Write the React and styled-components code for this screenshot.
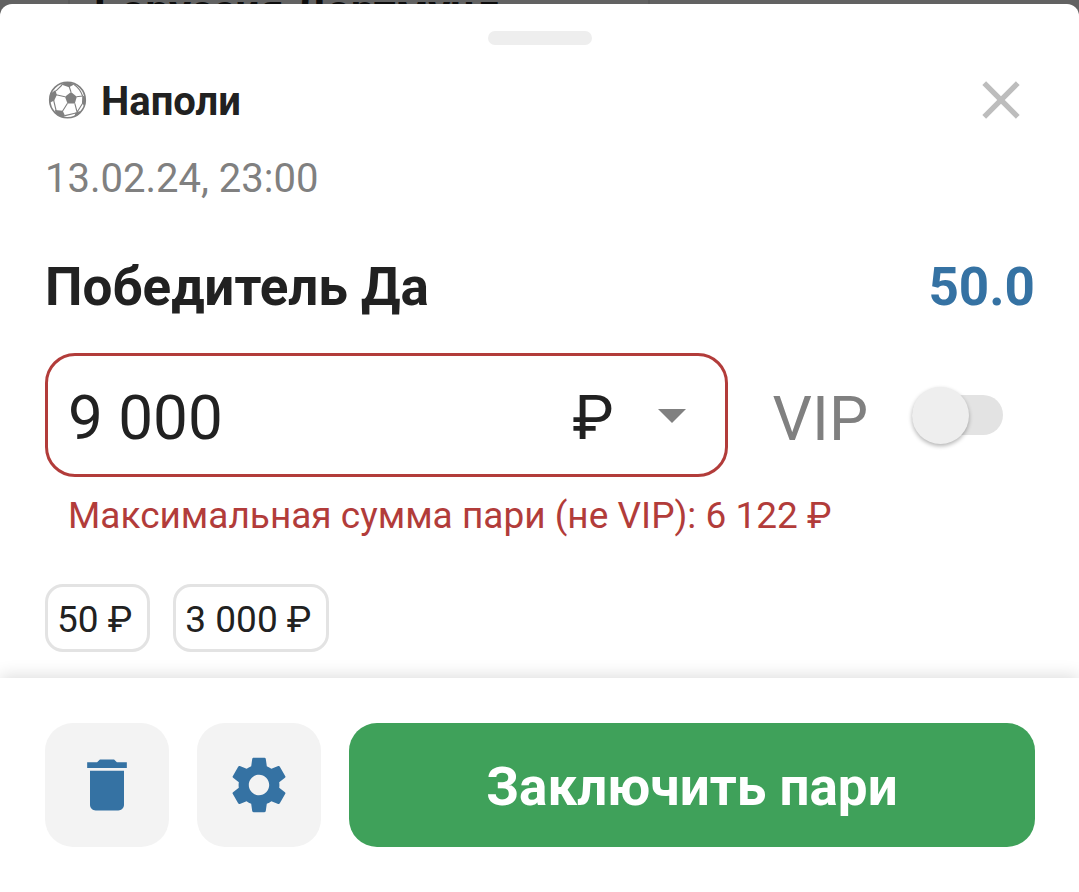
import React, { useState } from 'react';
import styled, { createGlobalStyle, ThemeProvider } from 'styled-components';
import { MdClose, MdDelete, MdSettings } from 'react-icons/md';

const theme = {
  colors: {
    text: '#212121',
    muted: '#808080',
    accent: '#3572a3',
    error: '#b23c3a',
    success: '#3fa15a',
    border: '#e3e3e3',
    surface: '#f3f3f3',
  },
};

const GlobalStyle = createGlobalStyle`
  * {
    box-sizing: border-box;
  }

  body {
    margin: 0;
    background-color: #626262;
    color: ${(props) => props.theme.colors.text};
    font-family: Roboto, 'Liberation Sans', sans-serif;
  }

  button,
  input,
  select {
    font-family: inherit;
    color: inherit;
  }
`;

const Page = styled.div`
  display: flex;
  flex-direction: column;
  min-height: 100vh;
`;

const Backdrop = styled.div`
  display: flex;
  align-items: flex-end;
  height: 4px;
  padding-left: 68px;
  overflow: hidden;
`;

const BackdropCard = styled.div`
  width: 582px;
  margin-bottom: -32px;
  padding-left: 24px;
  border: solid #5a5a5a;
  border-width: 0 2px;
  color: #0d0d0d;
  font-size: 43px;
  font-weight: 700;
  line-height: 52px;
`;

const Sheet = styled.main`
  display: flex;
  flex-direction: column;
  flex: 1;
  background-color: #ffffff;
  border-radius: 12px 12px 0 0;
`;

const Handle = styled.div`
  flex: none;
  align-self: center;
  width: 104px;
  height: 14px;
  margin-top: 27px;
  border-radius: 7px;
  background-color: #eeeeee;
`;

const Content = styled.form`
  flex: 1;
  padding: 25px 44px 24px 45px;
`;

const Row = styled.div`
  display: flex;
  align-items: center;
  justify-content: space-between;
`;

const Team = styled.h1`
  display: flex;
  align-items: center;
  gap: 12px;
  margin: 0;
  font-size: 40px;
  line-height: 56px;
`;

const TeamName = styled.span`
  padding-top: 4px;
`;

const CloseButton = styled.button`
  display: flex;
  align-items: center;
  justify-content: center;
  width: 68px;
  height: 60px;
  padding: 0;
  border: none;
  background: none;
  color: #bdbdbd;
`;

const EventDate = styled.p`
  margin: 25px 0 0;
  color: ${(props) => props.theme.colors.muted};
  font-size: 40px;
  line-height: 48px;
`;

const OutcomeRow = styled(Row)`
  margin-top: 50px;
  font-size: 53px;
  font-weight: 700;
  line-height: 68px;
`;

const Outcome = styled.h2`
  margin: 0;
  font-size: inherit;
`;

const Odds = styled.span`
  color: ${(props) => props.theme.colors.accent};
`;

const StakeRow = styled.div`
  display: flex;
  align-items: center;
  gap: 45px;
  margin-top: 32px;
`;

const StakeField = styled.div`
  display: flex;
  align-items: center;
  flex: 1;
  min-width: 0;
  height: 124px;
  padding: 0 32px 0 20px;
  border: 3px solid ${(props) => props.theme.colors.error};
  border-radius: 30px;
`;

const StakeInput = styled.input`
  flex: 1;
  min-width: 0;
  height: 80px;
  padding: 4px 0 0;
  border: none;
  outline: none;
  background: none;
  font-size: 62px;
`;

const CurrencyPicker = styled.label`
  display: flex;
  align-items: center;
  gap: 36px;
`;

const CurrencySelect = styled.select`
  height: 80px;
  padding: 4px 0 0;
  border: none;
  outline: none;
  background: none;
  appearance: none;
  font-size: 62px;
`;

const VipToggle = styled.label`
  display: flex;
  align-items: center;
  gap: 44px;
  margin-right: 32px;
  color: ${(props) => props.theme.colors.muted};
  font-size: 62px;
  line-height: 76px;
`;

const VipLabel = styled.span`
  padding-top: 8px;
`;

const Switch = styled.input`
  display: flex;
  align-items: center;
  width: 91px;
  height: 40px;
  margin: 0;
  border-radius: 20px;
  background-color: ${(props) => (props.checked ? '#9fc0da' : props.theme.colors.border)};
  appearance: none;

  &::before {
    content: '';
    width: 57px;
    height: 57px;
    margin-left: ${(props) => (props.checked ? '34px' : '0')};
    border-radius: 50%;
    background-color: #eeeeee;
    box-shadow: 0 2px 4px rgba(0, 0, 0, 0.3);
  }
`;

const ErrorText = styled.p`
  margin: 17px 0 0 23px;
  color: ${(props) => props.theme.colors.error};
  font-size: 37px;
  line-height: 44px;
`;

const Chips = styled.div`
  display: flex;
  gap: 23px;
  margin-top: 46px;
`;

const Chip = styled.button`
  height: 68px;
  padding: 2px 15px 0 9px;
  border: 3px solid ${(props) => props.theme.colors.border};
  border-radius: 18px;
  background: none;
  font-size: 37px;
`;

const Footer = styled.footer`
  display: flex;
  gap: 28px;
  padding: 45px 44px 45px 45px;
  background-color: #ffffff;
  box-shadow: 0 -2px 16px rgba(0, 0, 0, 0.14);
`;

const IconButton = styled.button`
  display: flex;
  align-items: center;
  justify-content: center;
  flex: none;
  width: 124px;
  height: 124px;
  padding: 0;
  border: none;
  border-radius: 28px;
  background-color: ${(props) => props.theme.colors.surface};
  color: ${(props) => props.theme.colors.accent};
`;

const SubmitButton = styled.button`
  flex: 1;
  height: 124px;
  padding: 4px 0 0;
  border: none;
  border-radius: 28px;
  background-color: ${(props) => props.theme.colors.success};
  color: #ffffff;
  font-size: 53px;
  font-weight: 700;
`;

function BallIcon() {
  return (
    <svg width="44" height="44" viewBox="0 0 44 44" fill="#808080" aria-hidden="true">
      <circle cx="22.5" cy="22" r="17.8" fill="none" stroke="#808080" strokeWidth="1.6" />
      <path d="M26 14l5.8 4.7-2 6.8h-7.3L20 18.7z" />
      <path d="M15.5 6.2l6-2.2 8.5 2-6 3.2z" />
      <path d="M4.3 25l.7-9 5.5-4 1.3 5-2.6 5.6z" />
      <path d="M10 32l7.7.8 2.6 5.4-3.3 1.4-6.5-4z" />
      <path d="M30.5 34.5l5-1.5-1.6 3.4-4.6 2.4z" />
      <path d="M37.3 17.6l2.7 1 .6 4.4-1 5.4-2.6-3.6z" />
      <path
        d="M26 14l-2-6M31.5 18.7l6.3-.7M29.8 25.3l2.4 9.2M22.5 25.3l-5 8M20 18.7l-9-2M8.6 22l2.6 11M20 37.6l11-2.6M32.2 34l5.6-9M11 12.8L17 7M29 6.5c4.5 3 7 7 8.6 11.5"
        fill="none"
        stroke="#808080"
        strokeWidth="1.1"
      />
    </svg>
  );
}

const quickStakes = ['50', '3 000'];

export default function App() {
  const [stake, setStake] = useState('9 000');
  const [currency, setCurrency] = useState('₽');
  const [vip, setVip] = useState(false);

  return (
    <ThemeProvider theme={theme}>
      <GlobalStyle />
      <Page>
        <Backdrop>
          <BackdropCard>Боруссия Дортмунд</BackdropCard>
        </Backdrop>
        <Sheet>
          <Handle />
          <Content id="bet" onSubmit={(e) => e.preventDefault()}>
            <Row>
              <Team>
                <BallIcon />
                <TeamName>Наполи</TeamName>
              </Team>
              <CloseButton type="button" aria-label="Закрыть">
                <MdClose size={64} />
              </CloseButton>
            </Row>
            <EventDate>13.02.24, 23:00</EventDate>
            <OutcomeRow>
              <Outcome>Победитель Да</Outcome>
              <Odds>50.0</Odds>
            </OutcomeRow>
            <StakeRow>
              <StakeField>
                <StakeInput
                  type="text"
                  aria-label="Сумма пари"
                  value={stake}
                  onChange={(e) => setStake(e.target.value)}
                />
                <CurrencyPicker>
                  <CurrencySelect
                    aria-label="Валюта"
                    value={currency}
                    onChange={(e) => setCurrency(e.target.value)}
                  >
                    <option value="₽">₽</option>
                  </CurrencySelect>
                  <svg width="42" height="20" viewBox="0 0 42 20" aria-hidden="true">
                    <path d="M7 4h28L21 18z" fill="#808080" />
                  </svg>
                </CurrencyPicker>
              </StakeField>
              <VipToggle>
                <VipLabel>VIP</VipLabel>
                <Switch
                  type="checkbox"
                  role="switch"
                  checked={vip}
                  onChange={(e) => setVip(e.target.checked)}
                />
              </VipToggle>
            </StakeRow>
            <ErrorText>Максимальная сумма пари (не VIP): 6 122 ₽</ErrorText>
            <Chips>
              {quickStakes.map((amount) => (
                <Chip key={amount} type="button" onClick={() => setStake(amount)}>
                  {amount} ₽
                </Chip>
              ))}
            </Chips>
          </Content>
          <Footer>
            <IconButton type="button" aria-label="Удалить">
              <MdDelete size={68} />
            </IconButton>
            <IconButton type="button" aria-label="Настройки">
              <MdSettings size={68} />
            </IconButton>
            <SubmitButton type="submit" form="bet">
              Заключить пари
            </SubmitButton>
          </Footer>
        </Sheet>
      </Page>
    </ThemeProvider>
  );
}
